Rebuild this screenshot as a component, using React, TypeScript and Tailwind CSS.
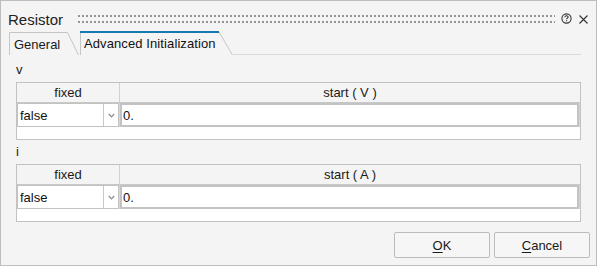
import React from "react";

const font = { fontFamily: '"Liberation Sans", Arial, sans-serif' };

function Dots() {
  return (
    <svg className="block w-full" height="8">
      <defs>
        <pattern id="dots" width="4" height="6" patternUnits="userSpaceOnUse">
          <rect width="2" height="2" fill="#969696" />
        </pattern>
      </defs>
      <rect width="100%" height="8" fill="url(#dots)" />
    </svg>
  );
}

function HelpIcon() {
  return (
    <svg width="11" height="11" viewBox="0 0 11 11" className="block">
      <circle cx="5.5" cy="5.5" r="4.6" fill="none" stroke="#333" strokeWidth="1.1" />
      <path d="M3.9 4.3 C3.9 3.3 4.6 2.8 5.5 2.8 C6.4 2.8 7.1 3.3 7.1 4.1 C7.1 5 5.6 5.2 5.6 6.3" fill="none" stroke="#333" strokeWidth="1.1" />
      <rect x="5.05" y="7.2" width="1.1" height="1.1" fill="#333" />
    </svg>
  );
}

function CloseIcon() {
  return (
    <svg width="9" height="9" viewBox="0 0 9 9" className="block">
      <path d="M0.5 0.5 L8.5 8.5 M8.5 0.5 L0.5 8.5" stroke="#333" strokeWidth="1.1" />
    </svg>
  );
}

function Chevron() {
  return (
    <svg width="7" height="5" viewBox="0 0 7 5" className="block">
      <path d="M0.8 1 L3.5 3.8 L6.2 1" fill="none" stroke="#8a8a8a" strokeWidth="1.2" />
    </svg>
  );
}

function Table({ unit }: { unit: string }) {
  return (
    <div className="ml-[15px] w-[565px] h-[58px] border border-[#c2c2c2] flex flex-col">
      <div className="h-[20px] flex border-b border-[#c8c8c8] text-[13px] leading-[15px] text-[#1a1a1a]">
        <div className="w-[103px] border-r border-[#d0d0d0] flex justify-center pt-[2px]">fixed</div>
        <div className="flex-1 flex justify-center pt-[2px]">start ( {unit} )</div>
      </div>
      <div className="h-[24px] flex bg-[#d6d6d6] text-[13px] leading-[15px] text-[#111]">
        <div className="w-[102px] flex border border-[#c3c3c3] bg-white">
          <div className="flex-1 pl-[2px] pt-[4px]">false</div>
          <div className="w-[15px] border-l border-[#c8c8c8] flex items-center justify-center">
            <Chevron />
          </div>
        </div>
        <div className="ml-[1px] mr-[1px] flex-1 border-2 border-[#c3c3c3] bg-white pl-[1px] pt-[3px]">0.</div>
      </div>
      <div className="flex-1 bg-white" />
    </div>
  );
}

export default function App() {
  return (
    <div style={font} className="w-[597px] h-[266px] bg-[#f4f4f4] border border-[#bdbdbd] flex flex-col text-[#1a1a1a]">
      <div className="h-[30px] flex items-start">
        <div className="pl-[7px] pt-[10px] text-[15px] leading-[17px] text-[#222]">Resistor</div>
        <div className="flex-1 ml-[15px] mt-[14px]">
          <Dots />
        </div>
        <div className="ml-[6px] mt-[12px]">
          <HelpIcon />
        </div>
        <div className="ml-[7px] mt-[14px] mr-[8px]">
          <CloseIcon />
        </div>
      </div>
      <div className="h-[24px] flex items-end pl-[8px] text-[13px] leading-[15px]">
        <div className="relative w-[71px] h-[23px] pl-[5px] pt-[5px] text-[#1a1a1a]">
          <svg className="absolute left-0 top-0" width="71" height="23">
            <path d="M0.5 23 L0.5 0.5 L58.5 0.5 L69.5 23" fill="none" stroke="#c6c6c6" strokeWidth="1" />
          </svg>
          <span className="relative">General</span>
        </div>
        <div className="relative w-[154px] h-[24px] pl-[4px] pt-[5px] text-[#111]">
          <svg className="absolute left-0 top-0" width="154" height="24">
            <path d="M0.5 24 L0.5 1 L139 1 L152.5 24" fill="none" stroke="#c6c6c6" strokeWidth="1" />
            <path d="M0 1 L139 1" stroke="#1479ad" strokeWidth="2" />
          </svg>
          <span className="relative tracking-[0.1px]">Advanced Initialization</span>
        </div>
        <div className="flex-1 mr-[15px] border-b border-[#d9d9d9]" />
      </div>
      <div className="mt-[7px] ml-[15px] text-[13px] leading-[15px]">v</div>
      <div className="mt-[5px]">
        <Table unit="V" />
      </div>
      <div className="mt-[4px] ml-[15px] text-[13px] leading-[15px]">i</div>
      <div className="mt-[5px]">
        <Table unit="A" />
      </div>
      <div className="mt-[10px] flex justify-end gap-[4px] pr-[6px]">
        <button className="w-[96px] h-[26px] border border-[#bcbcbc] rounded-[2px] bg-[#f6f6f6] text-[13px] leading-[15px] text-[#1a1a1a]">
          <span className="underline underline-offset-2">O</span>K
        </button>
        <button className="w-[96px] h-[26px] border border-[#bcbcbc] rounded-[2px] bg-[#f6f6f6] text-[13px] leading-[15px] text-[#1a1a1a]">
          <span className="underline underline-offset-2">C</span>ancel
        </button>
      </div>
    </div>
  );
}
